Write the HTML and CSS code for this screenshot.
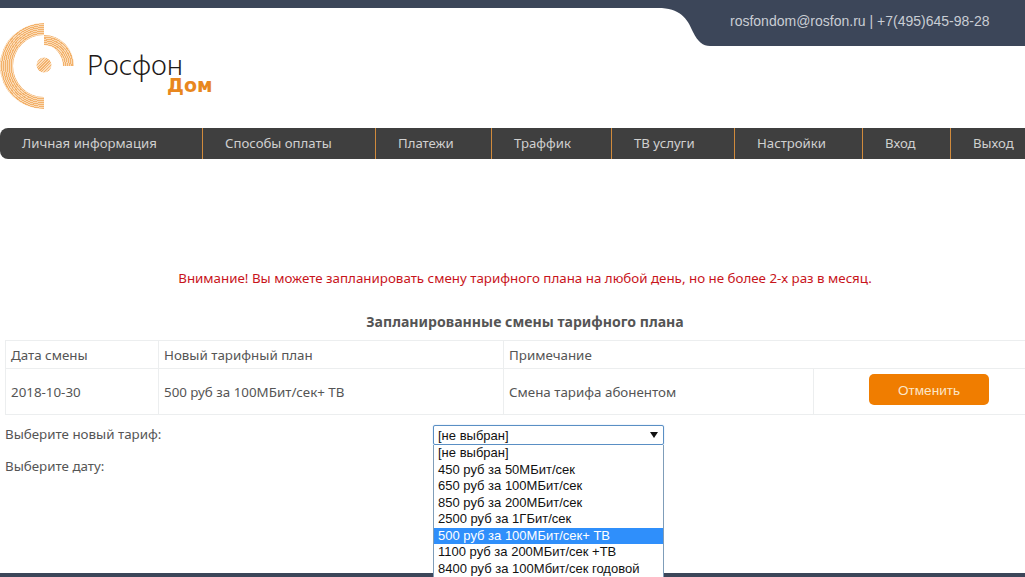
FILE: index.html
```html
<!DOCTYPE html>
<html lang="ru">
<head>
<meta charset="utf-8">
<title>Росфон Дом</title>
<link rel="stylesheet" href="styles.css">
</head>
<body>
<div class="page">
  <div class="topline"></div>
  <header class="header">
    <div class="brand">
      <svg class="logo-mark" width="76" height="90" viewBox="0 0 76 90" aria-hidden="true">
        <defs>
          <radialGradient id="rings" gradientUnits="userSpaceOnUse" cx="44" cy="43" r="1.9" spreadMethod="repeat">
            <stop offset="0" stop-color="#f3b26c"/>
            <stop offset="0.5" stop-color="#f3b26c"/>
            <stop offset="0.5" stop-color="#fad9b4"/>
            <stop offset="1" stop-color="#fad9b4"/>
          </radialGradient>
          <linearGradient id="dots" gradientUnits="userSpaceOnUse" x1="0" y1="0" x2="1.4" y2="1.4" spreadMethod="repeat">
            <stop offset="0" stop-color="#f3b26c"/>
            <stop offset="0.5" stop-color="#f3b26c"/>
            <stop offset="0.5" stop-color="#fbdcb9"/>
            <stop offset="1" stop-color="#fbdcb9"/>
          </linearGradient>
        </defs>
        <path fill="url(#rings)" d="M44 0 A44 43 0 0 0 44 86 L44 74 A31 31 0 0 1 44 12 Z"/>
        <path fill="url(#rings)" d="M44 12 A30 31 0 0 1 74 43 L63 43 A19 21 0 0 0 44 22 Z"/>
        <circle fill="url(#dots)" cx="44" cy="42" r="7.5"/>
      </svg>
      <div class="brand-name">Росфон</div>
      <div class="brand-sub">Дом</div>
    </div>
    <div class="contact-wrap">
      <svg class="contact-curve" width="52" height="38" viewBox="0 0 52 38" aria-hidden="true">
        <path fill="#3c4659" d="M0 0 C22 0 29 10 35 24 C40 34 45 38 52 38 L52 0 Z"/>
      </svg>
      <div class="contact">rosfondom@rosfon.ru | +7(495)645-98-28</div>
    </div>
  </header>
  <nav class="nav">
    <a class="nav-item">Личная информация</a>
    <a class="nav-item">Способы оплаты</a>
    <a class="nav-item">Платежи</a>
    <a class="nav-item">Траффик</a>
    <a class="nav-item">ТВ услуги</a>
    <a class="nav-item">Настройки</a>
    <a class="nav-item">Вход</a>
    <a class="nav-item nav-last">Выход</a>
  </nav>
  <main class="content">
    <p class="notice">Внимание! Вы можете запланировать смену тарифного плана на любой день, но не более 2-х раз в месяц.</p>
    <h2 class="title">Запланированные смены тарифного плана</h2>
    <table class="plans">
      <colgroup>
        <col class="c1"><col class="c2"><col class="c3"><col class="c4">
      </colgroup>
      <tr class="head-row">
        <td>Дата смены</td>
        <td>Новый тарифный план</td>
        <td colspan="2">Примечание</td>
      </tr>
      <tr class="body-row">
        <td>2018-10-30</td>
        <td>500 руб за 100МБит/сек+ ТВ</td>
        <td>Смена тарифа абонентом</td>
        <td class="action"><button class="cancel" type="button">Отменить</button></td>
      </tr>
    </table>
    <div class="form-row first">
      <div class="label">Выберите новый тариф:</div>
      <div class="select-box">
        <div class="select">
          <span>[не выбран]</span>
          <svg width="8" height="6" viewBox="0 0 8 6" aria-hidden="true"><path d="M0 0H8L4 6Z" fill="#111"/></svg>
        </div>
        <ul class="options">
          <li>[не выбран]</li>
          <li>450 руб за 50МБит/сек</li>
          <li>650 руб за 100МБит/сек</li>
          <li>850 руб за 200МБит/сек</li>
          <li>2500 руб за 1ГБит/сек</li>
          <li class="selected">500 руб за 100МБит/сек+ ТВ</li>
          <li>1100 руб за 200МБит/сек +ТВ</li>
          <li>8400 руб за 100Мбит/сек годовой</li>
        </ul>
      </div>
    </div>
    <div class="form-row">
      <div class="label">Выберите дату:</div>
    </div>
  </main>
  <footer class="footer"></footer>
</div>
</body>
</html>
```
FILE: styles.css
```css
html, body {
  margin: 0;
  padding: 0;
  background: #fff;
}
.page {
  width: 1025px;
  height: 577px;
  overflow: hidden;
  display: flex;
  flex-direction: column;
  font-family: "Noto Sans", sans-serif;
  font-size: 13.35px;
  color: #555;
}
.topline {
  height: 8px;
  background: #3c4659;
  flex: none;
}
.header {
  height: 120px;
  flex: none;
  display: flex;
  justify-content: space-between;
  align-items: flex-start;
}
.brand {
  position: relative;
  width: 230px;
  height: 120px;
}
.logo-mark {
  position: absolute;
  left: 0;
  top: 15px;
}
.brand-name {
  position: absolute;
  left: 87px;
  top: 44px;
  font-family: "Noto Sans", sans-serif;
  font-weight: 300;
  font-size: 27.5px;
  line-height: 26px;
  color: #1d1a18;
}
.brand-sub {
  position: absolute;
  left: 167px;
  top: 70px;
  font-family: "DejaVu Sans", sans-serif;
  font-weight: 700;
  font-size: 19px;
  line-height: 14px;
  color: #e8871e;
}
.contact-wrap {
  display: flex;
  align-items: flex-start;
}
.contact-curve {
  display: block;
  flex: none;
}
.contact {
  width: 315px;
  height: 38px;
  box-sizing: border-box;
  padding: 5px 35px 0 20px;
  background: #3c4659;
  color: #c9cdd4;
  font-family: "Liberation Sans", sans-serif;
  font-size: 14px;
  line-height: 17px;
  white-space: nowrap;
}
.nav {
  flex: none;
  width: 1040px;
  height: 31px;
  display: grid;
  grid-template-columns: 203px 173px 116px 120px 123px 128px 88px 89px;
  background: #3f3f3f;
  border-radius: 8px 0 0 8px;
}
.nav-item {
  padding-left: 22px;
  line-height: 30px;
  font-size: 13.2px;
  color: #d0d0d0;
  border-right: 1px solid #d08a3c;
  white-space: nowrap;
}
.nav-last {
  border-right: 0;
}
.content {
  flex: 1;
  min-height: 0;
  position: relative;
}
.notice {
  width: 1050px;
  margin: 109px 0 0;
  text-align: center;
  color: #c8141b;
  line-height: 20px;
  white-space: nowrap;
}
.title {
  width: 1050px;
  margin: 24px 0 0;
  font-size: 14.1px;
  font-weight: 700;
  line-height: 20px;
  text-align: center;
  color: #555;
}
.plans {
  margin: 8px 0 0 5px;
  width: 1040px;
  table-layout: fixed;
  border-collapse: collapse;
}
.c1 { width: 153px; }
.c2 { width: 345px; }
.c3 { width: 310px; }
.plans td {
  border: 1px solid #eceeef;
  padding: 0 5px;
  white-space: nowrap;
}
.head-row td { height: 27px; }
.body-row td { height: 45px; }
.plans .action {
  vertical-align: top;
  height: 40px;
  padding: 5px 0 0 55px;
}
.cancel {
  display: block;
  width: 120px;
  height: 31px;
  border: 0;
  border-radius: 5px;
  padding: 2px 0 0;
  background: #f07d00;
  color: #fbe6c8;
  font-family: "Liberation Sans", sans-serif;
  font-size: 13.6px;
}
.form-row {
  display: flex;
  align-items: flex-start;
  padding-left: 5px;
  height: 32px;
  line-height: 20px;
}
.first {
  margin-top: 9px;
}
.label {
  width: 428px;
  flex: none;
}
.select-box {
  position: relative;
  width: 231px;
  margin-top: 1px;
  font-family: "Liberation Sans", sans-serif;
  font-size: 13px;
  color: #111;
}
.select {
  height: 20px;
  box-sizing: border-box;
  border: 1px solid #5a8fc4;
  border-radius: 2px;
  box-shadow: 0 0 1px #6fa4dd;
  padding: 0 5px 0 4px;
  display: flex;
  align-items: center;
  justify-content: space-between;
  line-height: 17px;
}
.options {
  position: absolute;
  left: 0;
  top: 20px;
  width: 231px;
  box-sizing: border-box;
  margin: 0;
  padding: 0 0 6px;
  list-style: none;
  background: #fff;
  border: 1px solid #7f9db9;
  border-top: 0;
  z-index: 2;
}
.options li {
  height: 16.5px;
  line-height: 16.5px;
  padding-left: 4px;
  white-space: nowrap;
}
.options .selected {
  background: #2f8ffb;
  color: #fff;
}
.footer {
  flex: none;
  height: 4px;
  background: #3c4659;
}
```
